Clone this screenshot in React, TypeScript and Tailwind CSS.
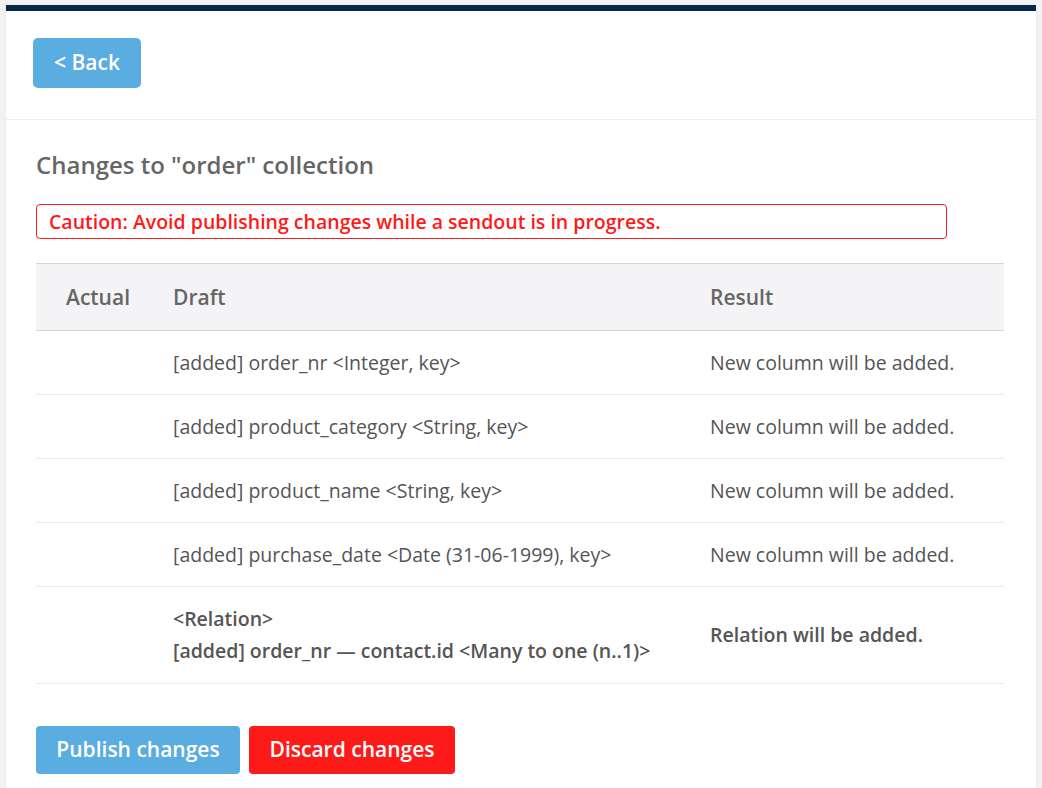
import React from "react";

interface ChangeRow {
  draft: string[];
  result: string;
  strong?: boolean;
}

const rows: ChangeRow[] = [
  { draft: ["[added] order_nr <Integer, key>"], result: "New column will be added." },
  { draft: ["[added] product_category <String, key>"], result: "New column will be added." },
  { draft: ["[added] product_name <String, key>"], result: "New column will be added." },
  { draft: ["[added] purchase_date <Date (31-06-1999), key>"], result: "New column will be added." },
  {
    draft: ["<Relation>", "[added] order_nr — contact.id <Many to one (n..1)>"],
    result: "Relation will be added.",
    strong: true,
  },
];

export default function App() {
  return (
    <div
      className="min-h-[788px] bg-[#f2f2f2] px-[6px] pt-[5px]"
      style={{ fontFamily: '"Open Sans", "Noto Sans", sans-serif' }}
    >
      <div className="min-h-[783px] border-t-[6px] border-[#06294a] bg-white shadow-[0_0_3px_rgba(0,0,0,0.06)]">
        <div className="border-b border-[#eeeeee] px-[27px] pb-[31px] pt-[27px]">
          <button className="h-[50px] w-[108px] rounded-[5px] bg-[#5aade0] text-[21px] font-semibold text-white">
            &lt; Back
          </button>
        </div>

        <div className="px-[30px] pt-[30px]">
          <h1 className="text-[24px] font-semibold leading-[30px] text-[#666666]">
            Changes to "order" collection
          </h1>

          <div className="mt-[24px] flex h-[35px] w-[911px] items-center rounded-[4px] border border-[#ff1a1a] px-[12px] text-[19.5px] font-semibold text-[#ff1a1a]">
            Caution: Avoid publishing changes while a sendout is in progress.
          </div>

          <table className="mt-[24px] w-[968px] border-collapse text-left">
            <thead>
              <tr className="h-[67px] border-y border-[#d6d6d6] bg-[#f4f4f6] text-[21px] font-semibold text-[#666666]">
                <th className="w-[107px] pl-[30px] pt-[2px] font-semibold">Actual</th>
                <th className="w-[537px] pl-[30px] pt-[2px] font-semibold">Draft</th>
                <th className="pl-[30px] pt-[2px] font-semibold">Result</th>
              </tr>
            </thead>
            <tbody>
              {rows.map((r, i) => (
                <tr
                  key={i}
                  className={`border-b border-[#eaeaea] text-[19.5px] text-[#555555] ${
                    r.strong ? "h-[97px] font-semibold" : "h-[64px]"
                  }`}
                >
                  <td className="pl-[30px]"></td>
                  <td className="pl-[30px] leading-[32px]">
                    {r.draft.map((line) => (
                      <div key={line} className="whitespace-nowrap">
                        {line}
                      </div>
                    ))}
                  </td>
                  <td className="pl-[30px] leading-[32px]">{r.result}</td>
                </tr>
              ))}
            </tbody>
          </table>

          <div className="mt-[42px] flex gap-[9px] pb-[14px]">
            <button className="h-[48px] w-[204px] rounded-[4px] bg-[#5aade0] text-[21px] font-semibold text-white">
              Publish changes
            </button>
            <button className="h-[48px] w-[206px] rounded-[4px] bg-[#ff1a1a] text-[21px] font-semibold text-white">
              Discard changes
            </button>
          </div>
        </div>
      </div>
    </div>
  );
}
